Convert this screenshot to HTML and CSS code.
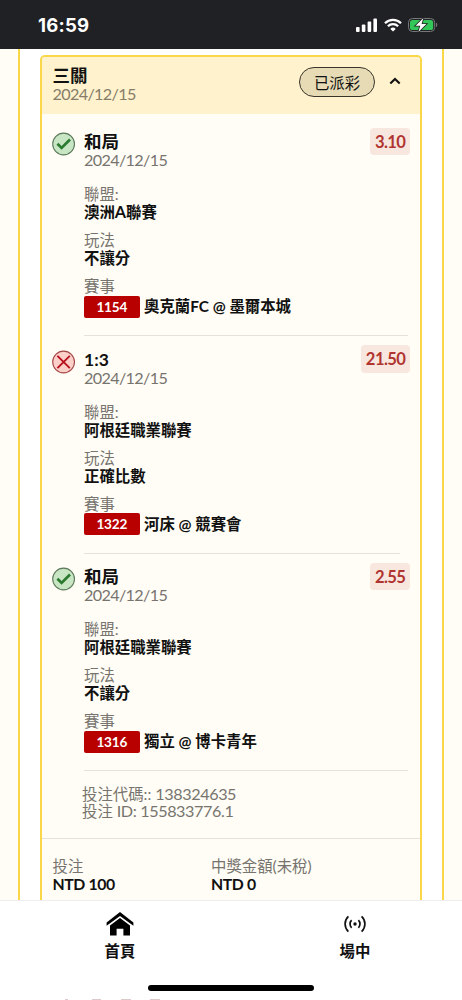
FILE: index.html
```
<!DOCTYPE html>
<html lang="zh-Hant">
<head>
	<meta charset="UTF-8">
	<title>投注紀錄</title>
	<link rel="stylesheet" href="styles.css">
</head>
<body>
	<div class="status">
		<span class="time">16:59</span>
		<div class="status-icons">
			<svg width="22" height="14" viewBox="0 0 22 14" fill="#fff">
				<rect x="0" y="9" width="3.6" height="5" rx="1"/>
				<rect x="5.8" y="6.6" width="3.6" height="7.4" rx="1"/>
				<rect x="11.6" y="3.6" width="3.6" height="10.4" rx="1"/>
				<rect x="17.4" y="0.6" width="3.6" height="13.4" rx="1"/>
			</svg>
			<svg width="18" height="14" viewBox="0 0 18 14" fill="none" stroke="#fff" stroke-width="2.3">
				<path d="M1 5.2a11.4 11.4 0 0 1 16 0M3.9 8.3a7.2 7.2 0 0 1 10.2 0"/>
				<path d="M9 13.6L6.3 10.9a3.8 3.8 0 0 1 5.4 0z" fill="#fff" stroke="none"/>
			</svg>
			<svg width="30" height="14" viewBox="0 0 30 14">
				<rect x="0.5" y="0.5" width="26.2" height="13" rx="4" fill="none" stroke="#77787a"/>
				<rect x="2" y="2" width="23.2" height="10" rx="2.6" fill="#33c759"/>
				<path d="M28 4.8c1.7.6 1.7 3.8 0 4.4z" fill="#77787a"/>
				<path d="M15.4 0L7.6 7.8h4.6L10.4 14l8-8h-4.8z" fill="#fff" stroke="#202124" stroke-width="1.6" paint-order="stroke"/>
			</svg>
		</div>
	</div>

	<div class="page">
		<div class="outer">
			<div class="card">
				<div class="card-head">
					<div>
						<h2>三關</h2>
						<p class="date">2024/12/15</p>
					</div>
					<span class="state">已派彩</span>
					<svg class="arrow" width="12" height="8" viewBox="0 0 12 8" fill="none" stroke="#111" stroke-width="2.1"><path d="M1.3 6.6L6 2l4.7 4.6"/></svg>
				</div>

				<div class="leg">
					<svg class="mark" width="24" height="24" viewBox="0 0 24 24">
						<circle cx="11.6" cy="12" r="10.9" fill="#c8e6c4" stroke="#5c7a5b" stroke-width="1.1"/>
						<path d="M5.4 11.7l4.2 4.2 8.4-8.4" fill="none" stroke="#2b7a30" stroke-width="2.7"/>
					</svg>
					<div class="leg-body">
						<div class="leg-top">
							<div>
								<h3>和局</h3>
								<p class="date">2024/12/15</p>
							</div>
							<span class="odds">3.10</span>
						</div>
						<dl>
							<dt>聯盟:</dt>
							<dd>澳洲<i>A</i>聯賽</dd>
							<dt>玩法</dt>
							<dd>不讓分</dd>
							<dt>賽事</dt>
							<dd class="match"><span class="num">1154</span>奧克蘭FC @ 墨爾本城</dd>
						</dl>
						<div class="line"></div>
					</div>
				</div>

				<div class="leg">
					<svg class="mark" width="24" height="24" viewBox="0 0 24 24">
						<circle cx="11.6" cy="12" r="10.9" fill="#fccfc9" stroke="#a34848" stroke-width="1.1"/>
						<path d="M5.4 5.8l12.4 12.4M17.8 5.8L5.4 18.2" fill="none" stroke="#b8101c" stroke-width="1.9"/>
					</svg>
					<div class="leg-body">
						<div class="leg-top">
							<div>
								<h3>1:3</h3>
								<p class="date">2024/12/15</p>
							</div>
							<span class="odds">21.50</span>
						</div>
						<dl>
							<dt>聯盟:</dt>
							<dd>阿根廷職業聯賽</dd>
							<dt>玩法</dt>
							<dd>正確比數</dd>
							<dt>賽事</dt>
							<dd class="match"><span class="num">1322</span>河床 @ 競賽會</dd>
						</dl>
						<div class="line short"></div>
					</div>
				</div>

				<div class="leg">
					<svg class="mark" width="24" height="24" viewBox="0 0 24 24">
						<circle cx="11.6" cy="12" r="10.9" fill="#c8e6c4" stroke="#5c7a5b" stroke-width="1.1"/>
						<path d="M5.4 11.7l4.2 4.2 8.4-8.4" fill="none" stroke="#2b7a30" stroke-width="2.7"/>
					</svg>
					<div class="leg-body">
						<div class="leg-top">
							<div>
								<h3>和局</h3>
								<p class="date">2024/12/15</p>
							</div>
							<span class="odds">2.55</span>
						</div>
						<dl>
							<dt>聯盟:</dt>
							<dd>阿根廷職業聯賽</dd>
							<dt>玩法</dt>
							<dd>不讓分</dd>
							<dt>賽事</dt>
							<dd class="match"><span class="num">1316</span>獨立 @ 博卡青年</dd>
						</dl>
						<div class="line"></div>
					</div>
				</div>

				<div class="codes">
					<p>投注代碼:: <i>138324635</i></p>
					<p>投注 <i>ID: 155833776.1</i></p>
				</div>

				<div class="totals">
					<div>
						<p>投注</p>
						<b>NTD 100</b>
					</div>
					<div>
						<p>中獎金額(未稅)</p>
						<b>NTD 0</b>
					</div>
				</div>
			</div>
		</div>
	</div>

	<div class="tabs">
		<div class="tab home">
			<svg width="28" height="26" viewBox="0 0 28 26">
				<path d="M14 1L0.6 11.4v3.4L14 5l13.4 9.8v-3.4z"/>
				<path d="M14 7L4 14.4v10.2h6.6v-6.8h6.8v6.8H24V14.4z"/>
			</svg>
			<span>首頁</span>
		</div>
		<div class="tab live">
			<svg width="22" height="26" viewBox="0 0 22 26" fill="none" stroke="#111" stroke-width="1.7">
				<circle cx="11" cy="13" r="1.7" fill="#111" stroke="none"/>
				<path d="M7.6 9.2a5.4 5.4 0 0 0 0 7.6M14.4 9.2a5.4 5.4 0 0 1 0 7.6M4.4 5.4a10.4 10.4 0 0 0 0 15.2M17.6 5.4a10.4 10.4 0 0 1 0 15.2"/>
			</svg>
			<span>場中</span>
		</div>
		<div class="bar"></div>
		<svg class="edge" width="462" height="1" viewBox="0 0 462 1">
			<path d="M65 .5h3M92 .5h9M121 .5h10M150 .5h10" stroke="#dccaca"/>
		</svg>
	</div>
</body>
</html>
```
FILE: styles.css
```
*{
	margin: 0;
	padding: 0;
	box-sizing: border-box;
}
body{
	width: 462px;
	height: 1000px;
	display: flex;
	flex-direction: column;
	overflow: hidden;
	background-color: #fff;
	color: #111;
	font: 15.4px/18px Lato, "Noto Sans CJK TC", sans-serif;
}
svg{display: block; flex: none;}
i{
	font-style: normal;
	font-size: 16.2px;
	line-height: 1;
	letter-spacing: -0.4px;
}
.status{
	flex: none;
	height: 49px;
	padding: 0 24px 0 38px;
	display: flex;
	justify-content: space-between;
	align-items: center;
	background-color: #202124;
	color: #fff;
}
.time{
	font: bold 18.6px/20px Inter, sans-serif;
	letter-spacing: 0.2px;
	padding-top: 1px;
}
.status-icons{
	display: flex;
	gap: 6px;
}
.page{
	flex: none;
	height: 851px;
	padding: 0 18px;
	overflow: hidden;
	background-color: #fffdf5;
}
.outer{
	height: 851px;
	padding: 6px 20px 0;
	border: solid #fad748;
	border-width: 0 2px;
	background-color: #fff;
}
.card{
	height: 860px;
	border: 2px solid #fad748;
	border-radius: 5px;
	background-color: #fffdf5;
}
.card-head{
	height: 57px;
	padding: 0 19px 0 10.5px;
	display: flex;
	border-radius: 3px 3px 0 0;
	background-color: #fff2cc;
}
.card-head > div{
	flex: 1;
	padding-top: 10px;
}
h2, h3{
	font-size: 17.5px;
	line-height: 18px;
	font-weight: bold;
}
.date{
	color: #77746f;
	font-size: 16.2px;
	letter-spacing: -0.65px;
}
.card-head .date{color: #857d69;}
.state{
	width: 76px;
	height: 30px;
	margin-top: 10px;
	border: 1px solid #39352a;
	border-radius: 15px;
	background-color: #e6dbb4;
	line-height: 30px;
	text-align: center;
}
.arrow{margin: 20px 0 0 14px;}
.leg{
	display: flex;
	height: 217.5px;
	padding: 0 10.5px 0 10px;
}
.card-head + .leg{
	margin-top: 4px;
}
.mark{margin-top: 14px;}
.leg-body{
	flex: 1;
	padding-left: 8px;
}
.leg-top{
	display: flex;
	justify-content: space-between;
	height: 67px;
}
.leg-top h3{margin-top: 15px;}
.odds{
	height: 27.5px;
	margin-top: 9.5px;
	padding: 0 4.2px 0 5px;
	border-radius: 4px;
	background-color: #f8e7df;
	color: #b03530;
	font-size: 16.6px;
	line-height: 28px;
	letter-spacing: -0.6px;
	font-weight: bold;
}
dt{color: #77746f;}
dd{
	margin-bottom: 9px;
	line-height: 19px;
	font-weight: bold;
}
dd i{letter-spacing: 0;}
.match{
	display: flex;
	align-items: center;
	height: 22px;
	margin-top: 0.5px;
	margin-bottom: 17.5px;
}
.num{
	width: 55.5px;
	height: 22px;
	margin-right: 4.5px;
	border-radius: 2px;
	background-color: #b90000;
	color: #fff;
	font-size: 13.6px;
	line-height: 22px;
	letter-spacing: -0.2px;
	text-align: center;
}
.line{
	height: 1px;
	margin-right: 2px;
	background-color: #e5e2da;
}
.line.short{margin-right: 10px;}
.codes{
	height: 67px;
	padding: 15px 0 0 40px;
	color: #77746f;
	line-height: 17px;
}
.totals{
	display: grid;
	grid-template-columns: 158.5px 1fr;
	padding: 19.5px 10.5px 0;
	border-top: 1px solid #e5e2da;
	line-height: 17px;
}
.totals p{color: #77746f;}
.totals b{
	display: block;
	margin-top: -0.5px;
	font-size: 15.8px;
	letter-spacing: -0.4px;
}
.tabs{
	flex: none;
	position: relative;
	height: 100px;
	display: flex;
	border-top: 1px solid #eee;
	background-color: #fff;
}
.tab{
	flex: 1;
	display: flex;
	flex-direction: column;
	align-items: center;
	padding-top: 10px;
	font-weight: bold;
}
.tab span{margin-top: 5px;}
.home{margin: 0 -4.5px 0 4.5px;}
.live{margin: 0 -8.5px 0 8.5px;}
/* home indicator */
.bar{
	position: absolute;
	left: 148px;
	top: 84px;
	width: 166px;
	height: 6px;
	border-radius: 3px;
	background-color: #000;
}
.edge{
	position: absolute;
	left: 0;
	bottom: 0;
}
```
